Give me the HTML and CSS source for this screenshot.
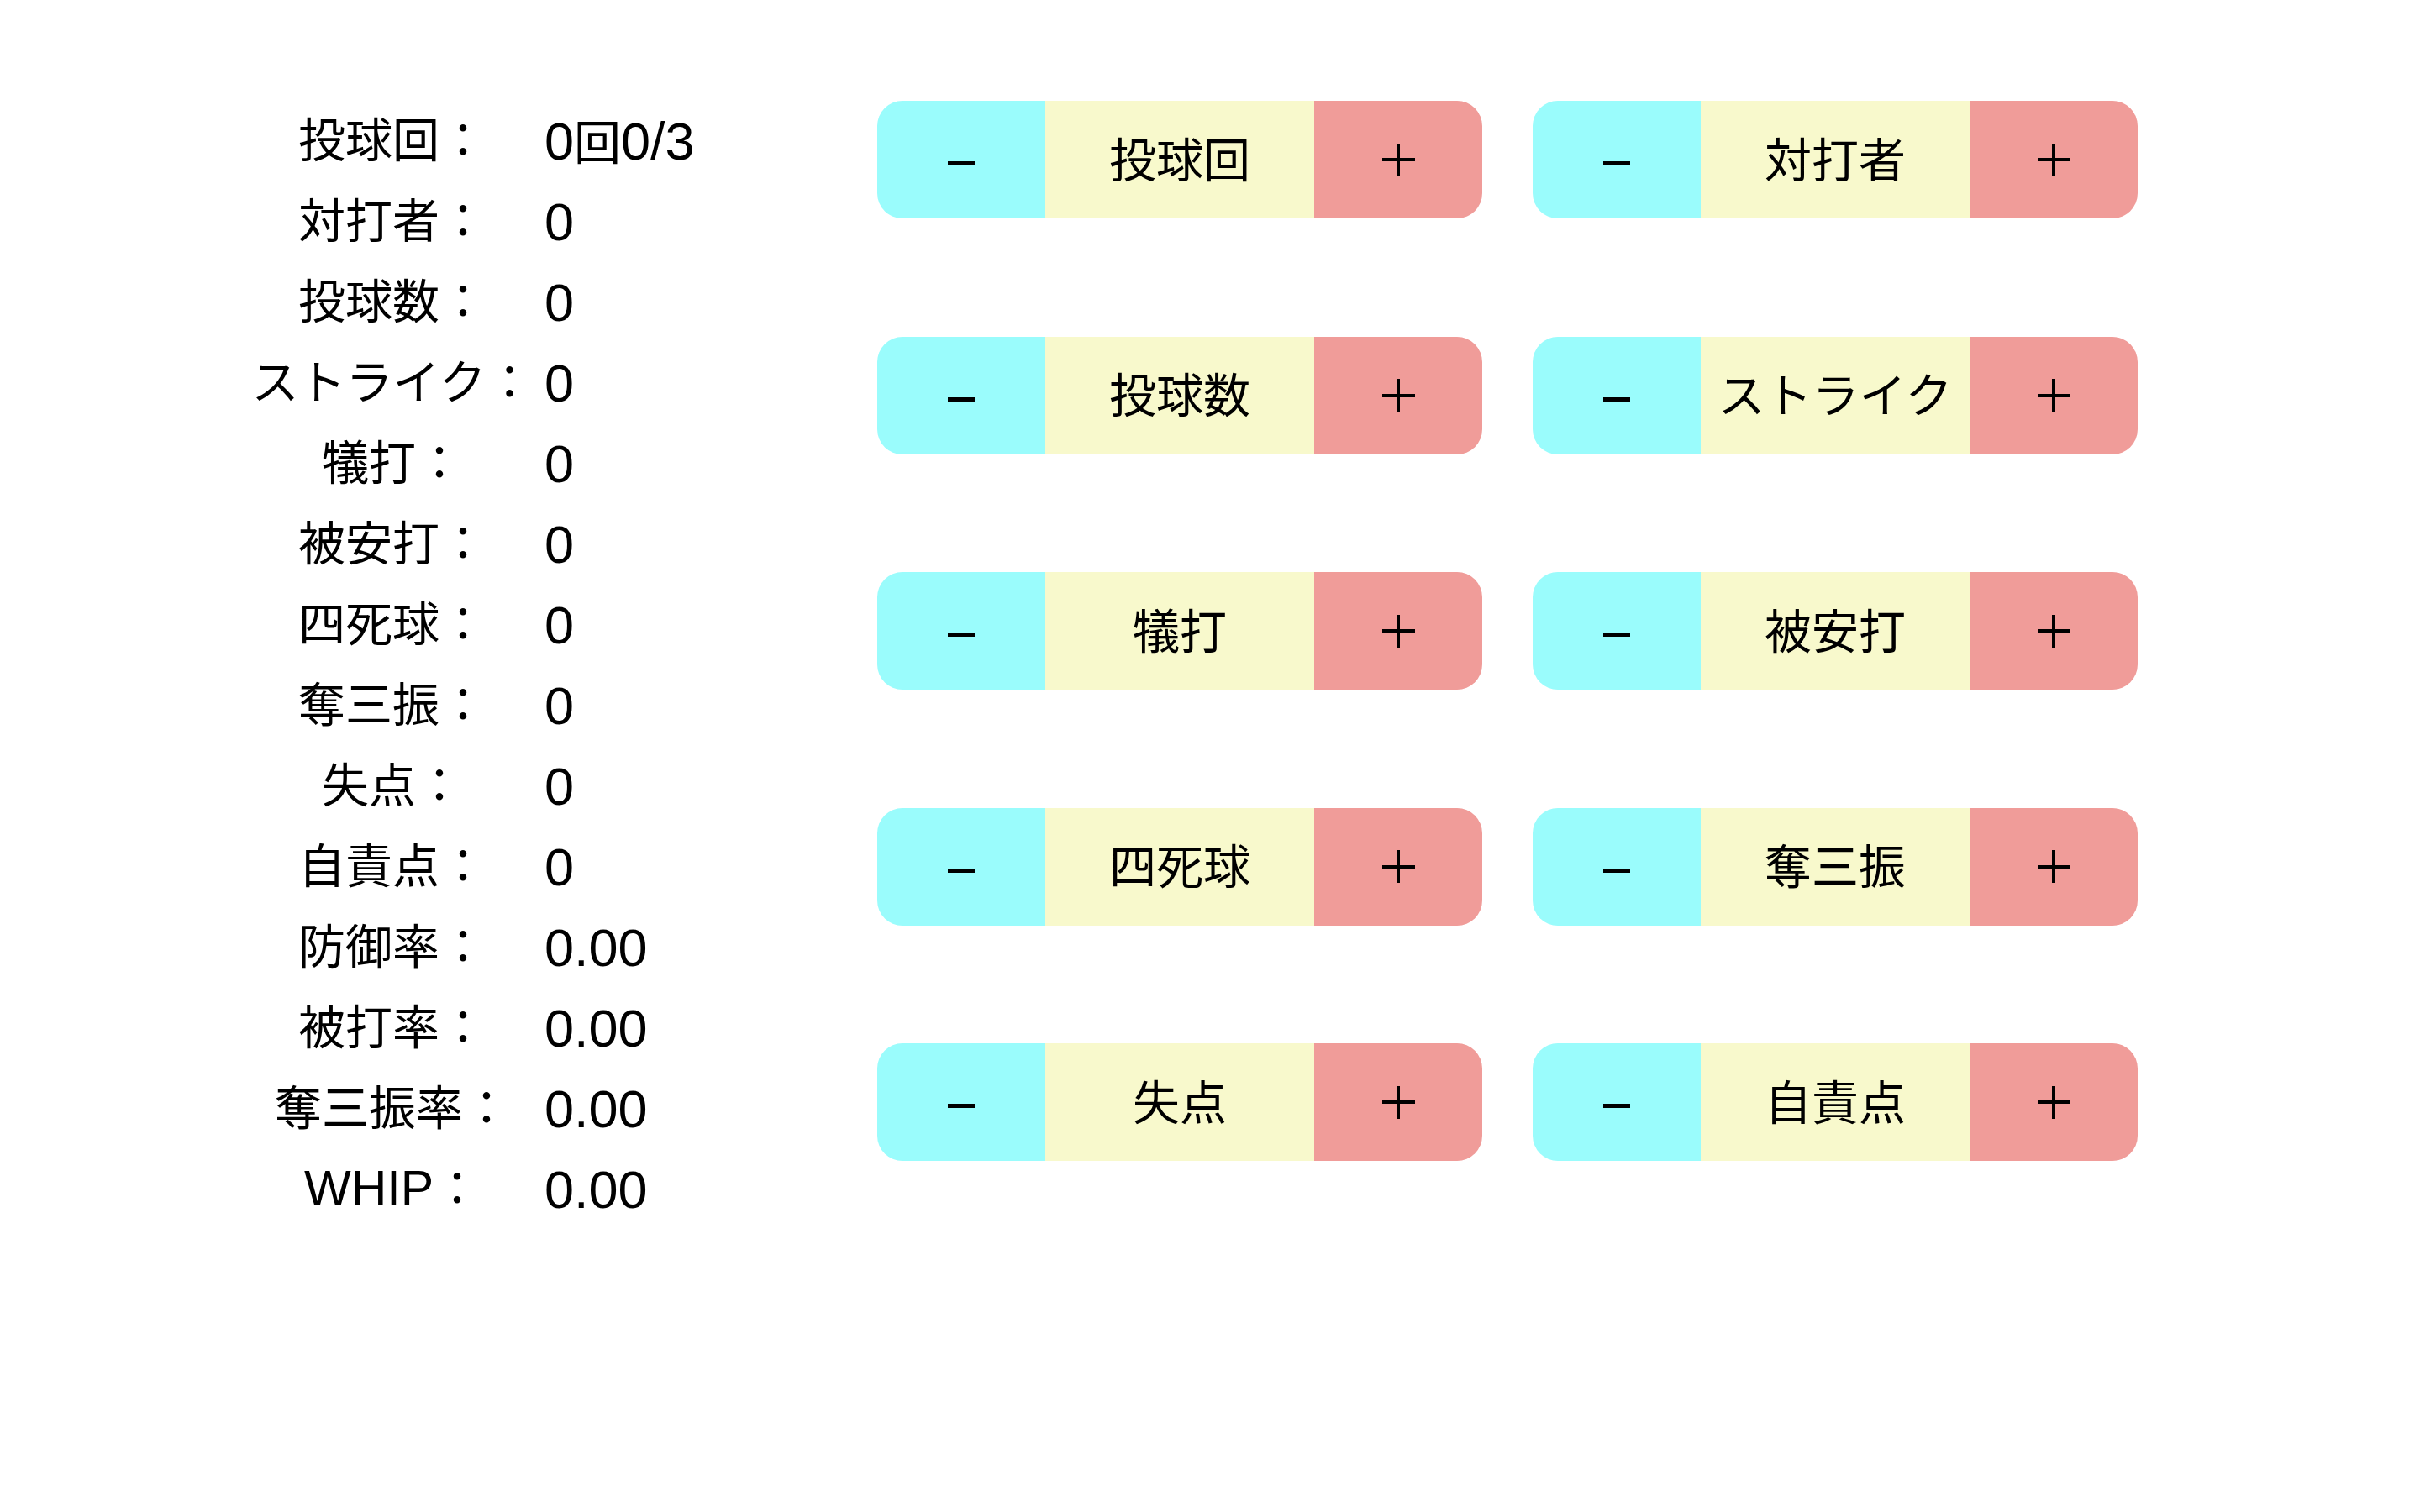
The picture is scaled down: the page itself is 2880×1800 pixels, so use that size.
FILE: index.html
```html
<!DOCTYPE html>
<html lang="ja">
<head>
    <meta charset="UTF-8">
    <meta name="viewport" content="width=device-width, initial-scale=1.0">
    <title>投手成績カウンター</title>
    <link rel="stylesheet" href="styles.css">
</head>
<body>

<div class="page">
    <div class="stats">
        <div class="label">投球回：</div>
        <div class="value" id="innings">0<span class="unit">回</span>0/3</div>
        <div class="label">対打者：</div>
        <div class="value" id="batters">0</div>
        <div class="label">投球数：</div>
        <div class="value" id="pitches">0</div>
        <div class="label">ストライク：</div>
        <div class="value" id="strikes">0</div>
        <div class="label">犠打：</div>
        <div class="value" id="sacrifices">0</div>
        <div class="label">被安打：</div>
        <div class="value" id="hits">0</div>
        <div class="label">四死球：</div>
        <div class="value" id="walks">0</div>
        <div class="label">奪三振：</div>
        <div class="value" id="strikeouts">0</div>
        <div class="label">失点：</div>
        <div class="value" id="runs">0</div>
        <div class="label">自責点：</div>
        <div class="value" id="earnedRuns">0</div>
        <div class="label">防御率：</div>
        <div class="value" id="era">0.00</div>
        <div class="label">被打率：</div>
        <div class="value" id="average">0.00</div>
        <div class="label">奪三振率：</div>
        <div class="value" id="strikeoutRate">0.00</div>
        <div class="label"><span class="latin">WHIP</span>：</div>
        <div class="value" id="whip">0.00</div>
    </div>

    <div class="controls">
        <div class="counter">
            <button class="minus" aria-label="投球回 -1" onclick="change('outs', -1)"></button>
            <div class="name">投球回</div>
            <button class="plus" aria-label="投球回 +1" onclick="change('outs', 1)"></button>
        </div>
        <div class="counter">
            <button class="minus" aria-label="対打者 -1" onclick="change('batters', -1)"></button>
            <div class="name">対打者</div>
            <button class="plus" aria-label="対打者 +1" onclick="change('batters', 1)"></button>
        </div>
        <div class="counter">
            <button class="minus" aria-label="投球数 -1" onclick="change('pitches', -1)"></button>
            <div class="name">投球数</div>
            <button class="plus" aria-label="投球数 +1" onclick="change('pitches', 1)"></button>
        </div>
        <div class="counter">
            <button class="minus" aria-label="ストライク -1" onclick="change('strikes', -1)"></button>
            <div class="name">ストライク</div>
            <button class="plus" aria-label="ストライク +1" onclick="change('strikes', 1)"></button>
        </div>
        <div class="counter">
            <button class="minus" aria-label="犠打 -1" onclick="change('sacrifices', -1)"></button>
            <div class="name">犠打</div>
            <button class="plus" aria-label="犠打 +1" onclick="change('sacrifices', 1)"></button>
        </div>
        <div class="counter">
            <button class="minus" aria-label="被安打 -1" onclick="change('hits', -1)"></button>
            <div class="name">被安打</div>
            <button class="plus" aria-label="被安打 +1" onclick="change('hits', 1)"></button>
        </div>
        <div class="counter">
            <button class="minus" aria-label="四死球 -1" onclick="change('walks', -1)"></button>
            <div class="name">四死球</div>
            <button class="plus" aria-label="四死球 +1" onclick="change('walks', 1)"></button>
        </div>
        <div class="counter">
            <button class="minus" aria-label="奪三振 -1" onclick="change('strikeouts', -1)"></button>
            <div class="name">奪三振</div>
            <button class="plus" aria-label="奪三振 +1" onclick="change('strikeouts', 1)"></button>
        </div>
        <div class="counter">
            <button class="minus" aria-label="失点 -1" onclick="change('runs', -1)"></button>
            <div class="name">失点</div>
            <button class="plus" aria-label="失点 +1" onclick="change('runs', 1)"></button>
        </div>
        <div class="counter">
            <button class="minus" aria-label="自責点 -1" onclick="change('earnedRuns', -1)"></button>
            <div class="name">自責点</div>
            <button class="plus" aria-label="自責点 +1" onclick="change('earnedRuns', 1)"></button>
        </div>
    </div>
</div>

<script>
    const counts = {
        outs: 0, batters: 0, pitches: 0, strikes: 0, sacrifices: 0,
        hits: 0, walks: 0, strikeouts: 0, runs: 0, earnedRuns: 0
    };

    function change(key, step) {
        counts[key] = Math.max(0, counts[key] + step);
        render();
    }

    function rate(num, den) {
        return den > 0 ? (num / den).toFixed(2) : "0.00";
    }

    function render() {
        const innings = Math.floor(counts.outs / 3);
        document.getElementById("innings").innerHTML =
            `${innings}<span class="unit">回</span>${counts.outs % 3}/3`;

        for (const key of Object.keys(counts)) {
            if (key !== "outs") {
                document.getElementById(key).textContent = counts[key];
            }
        }

        const atBats = counts.batters - counts.walks - counts.sacrifices;
        document.getElementById("era").textContent = rate(counts.earnedRuns * 27, counts.outs);
        document.getElementById("average").textContent = rate(counts.hits, atBats);
        document.getElementById("strikeoutRate").textContent = rate(counts.strikeouts * 27, counts.outs);
        document.getElementById("whip").textContent = rate((counts.hits + counts.walks) * 3, counts.outs);
    }
</script>

</body>
</html>
```

FILE: styles.css
```css
body {
    margin: 0;
    font-family: "Liberation Sans", "Noto Sans CJK JP", sans-serif;
    color: #000;
    background-color: #fff;
}
.page {
    display: flex;
    align-items: flex-start;
    padding: 120px 0 0 299px;
}
.stats {
    flex: 0 0 745px;
    display: grid;
    grid-template-columns: 336px auto;
    column-gap: 13px;
    font-size: 56px;
    line-height: 96px;
}
.label {
    text-align: center;
    white-space: nowrap;
}
.latin {
    font-size: 59px;
    line-height: 1;
}
.value {
    font-size: 63px;
    white-space: nowrap;
}
.unit {
    font-size: 56px;
    line-height: 1;
}
.controls {
    display: grid;
    grid-template-columns: repeat(2, 720px);
    column-gap: 60px;
    row-gap: 140.5px;
}
.counter {
    display: flex;
    height: 140px;
    border-radius: 30px;
    overflow: hidden;
}
.counter button {
    width: 200px;
    padding: 0;
    margin: 0;
    border: none;
    cursor: pointer;
    display: flex;
    align-items: center;
    justify-content: center;
}
.minus {
    background-color: #9afcfc;
}
.minus::before {
    content: "";
    width: 32px;
    height: 5px;
    margin-top: 9px;
    background-color: #000;
}
.plus {
    background-color: #f09c99;
}
.plus::before {
    content: "";
    width: 39px;
    height: 39px;
    background:
        linear-gradient(#000, #000) center / 39px 4px no-repeat,
        linear-gradient(#000, #000) center / 4px 39px no-repeat;
}
.name {
    width: 320px;
    padding-bottom: 8px;
    box-sizing: border-box;
    display: flex;
    align-items: center;
    justify-content: center;
    background-color: #f8f9cc;
    font-family: "Noto Sans CJK JP", sans-serif;
    font-size: 56px;
}
```
